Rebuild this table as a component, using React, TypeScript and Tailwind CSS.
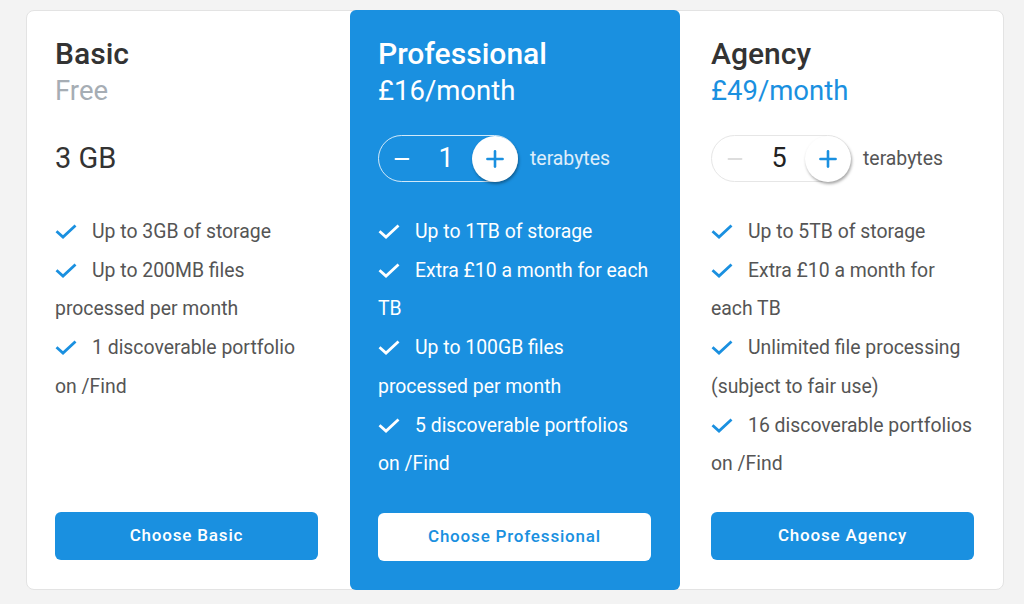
import { Minus, Plus } from 'lucide-react';

type Plan = {
  name: string;
  price: string;
  features: string[];
  button: string;
};

const plans: Plan[] = [
  {
    name: 'Basic',
    price: 'Free',
    features: ['Up to 3GB of storage', 'Up to 200MB files processed per month', '1 discoverable portfolio on /Find'],
    button: 'Choose Basic',
  },
  {
    name: 'Professional',
    price: '£16/month',
    features: [
      'Up to 1TB of storage',
      'Extra £10 a month for each TB',
      'Up to 100GB files processed per month',
      '5 discoverable portfolios on /Find',
    ],
    button: 'Choose Professional',
  },
  {
    name: 'Agency',
    price: '£49/month',
    features: [
      'Up to 5TB of storage',
      'Extra £10 a month for each TB',
      'Unlimited file processing (subject to fair use)',
      '16 discoverable portfolios on /Find',
    ],
    button: 'Choose Agency',
  },
];

function Check({ className }: { className: string }) {
  return (
    <svg width="22" height="15" viewBox="0 0 22 15" fill="none" className={`inline-block mr-[15px] align-[-1px] ${className}`}>
      <polyline points="1.5,7.2 8,13 20.5,1.5" stroke="currentColor" strokeWidth="2.8" />
    </svg>
  );
}

function Features({ items, light }: { items: string[]; light?: boolean }) {
  return (
    <ul className={`mt-[31px] text-[19.4px] leading-[38.7px] ${light ? 'text-white' : 'text-[#555]'}`}>
      {items.map((f) => (
        <li key={f}>
          <Check className={light ? 'text-white' : 'text-[#1a90e0]'} />
          {f}
        </li>
      ))}
    </ul>
  );
}

// Stepper for terabytes
function Stepper({ value, light }: { value: number; light?: boolean }) {
  return (
    <div className="mt-[27px] flex items-center h-[47px]">
      <div
        className={`flex items-center w-[140px] h-[47px] rounded-full border ${
          light ? 'border-white/80' : 'border-[#e6e6e6]'
        }`}
      >
        <div className="w-[46px] flex justify-center">
          <Minus className={`h-[22px] w-[22px] ${light ? 'text-white' : 'text-[#dddddd]'}`} strokeWidth={2.2} />
        </div>
        <div className={`w-[42px] text-center text-[27px] ${light ? 'text-white' : 'text-[#222]'}`}>{value}</div>
        <div className="ml-auto -mr-px w-[46px] h-[46px] rounded-full bg-white shadow-[1px_2px_3px_rgba(0,0,0,0.35)] flex items-center justify-center">
          <Plus className="h-[26px] w-[26px] text-[#1a90e0]" strokeWidth={2.4} />
        </div>
      </div>
      <span className={`ml-3 text-[19.4px] ${light ? 'text-white/85' : 'text-[#555]'}`}>terabytes</span>
    </div>
  );
}

const titleFont = "font-['Roboto_Medium',Roboto,sans-serif] font-medium";

export default function App() {
  const [basic, pro, agency] = plans;

  return (
    <div className="min-h-screen bg-[#f3f3f3] pt-[10px] pl-[26px]" style={{ fontFamily: 'Roboto, sans-serif' }}>
      <div className="flex w-[978px] h-[580px] bg-white border border-[#e3e3e3] rounded-lg">
        {/* Basic */}
        <div className="w-[323px] pl-[28px] pr-[32px] pt-[25px] pb-[29px] flex flex-col">
          <h2 className={`text-[30px] leading-[36px] text-[#333] ${titleFont}`}>{basic.name}</h2>
          <p className="text-[27.5px] leading-[38px] text-[#a6adb4]">{basic.price}</p>
          <div className="mt-[25px] h-[47px] flex items-center text-[29px] text-[#333]">3 GB</div>
          <Features items={basic.features} />
          <button className={`mt-auto h-[48px] w-full rounded-md bg-[#1a90e0] text-white text-[17px] tracking-[0.8px] ${titleFont}`}>
            {basic.button}
          </button>
        </div>

        {/* Professional */}
        <div className="-my-px w-[330px] h-[580px] bg-[#1a90e0] rounded-md pl-[28px] pr-[29px] pt-[26px] pb-[29px] flex flex-col">
          <h2 className={`text-[30px] leading-[36px] text-white ${titleFont}`}>{pro.name}</h2>
          <p className="text-[27.5px] leading-[38px] text-white">{pro.price}</p>
          <div className="-mt-[2px]">
            <Stepper value={1} light />
          </div>
          <Features items={pro.features} light />
          <button className={`mt-auto h-[48px] w-full rounded-md bg-white text-[#1a90e0] text-[17px] tracking-[0.8px] ${titleFont}`}>
            {pro.button}
          </button>
        </div>

        {/* Agency */}
        <div className="w-[323px] pl-[31px] pr-[29px] pt-[25px] pb-[29px] flex flex-col">
          <h2 className={`text-[30px] leading-[36px] text-[#333] ${titleFont}`}>{agency.name}</h2>
          <p className="text-[27.5px] leading-[38px] text-[#1a90e0]">{agency.price}</p>
          <div className="-mt-[2px]">
            <Stepper value={5} />
          </div>
          <Features items={agency.features} />
          <button className={`mt-auto h-[48px] w-full rounded-md bg-[#1a90e0] text-white text-[17px] tracking-[0.8px] ${titleFont}`}>
            {agency.button}
          </button>
        </div>
      </div>
    </div>
  );
}
